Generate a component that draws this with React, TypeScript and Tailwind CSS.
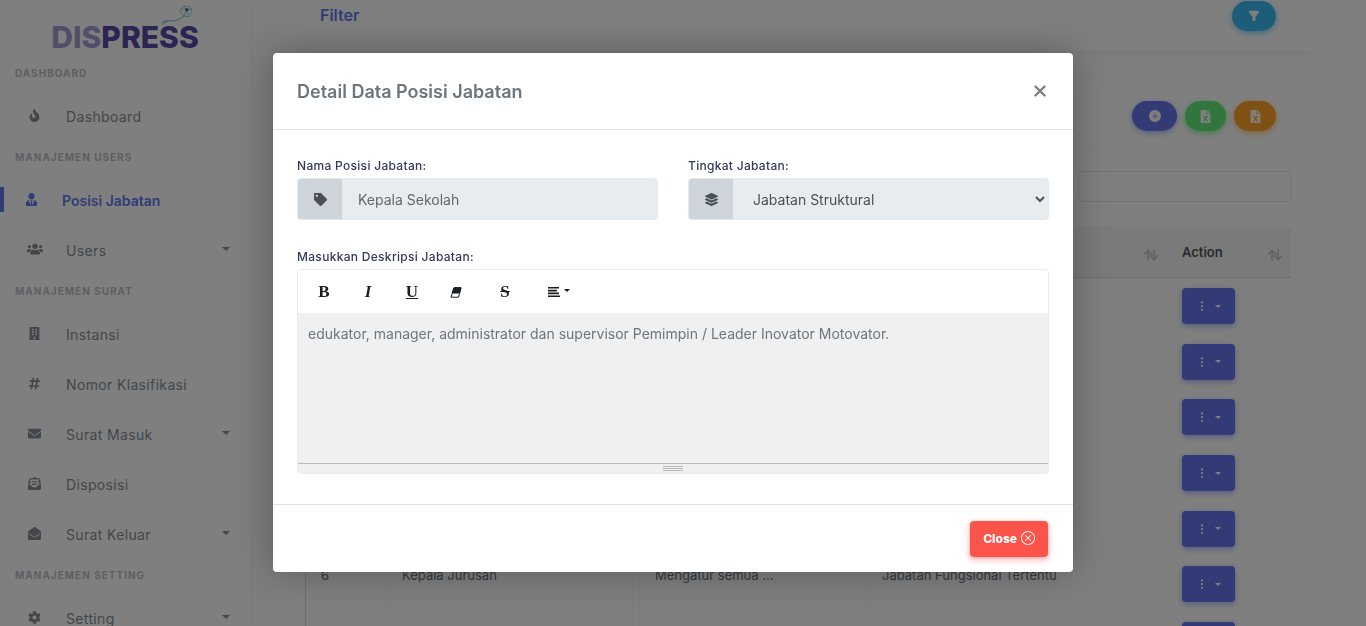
import type { ReactNode } from "react";
import {
  FaBuilding,
  FaCog,
  FaEnvelope,
  FaEnvelopeOpen,
  FaEnvelopeOpenText,
  FaFileExcel,
  FaFire,
  FaHashtag,
  FaLayerGroup,
  FaTag,
  FaUsers,
  FaUserTie,
} from "react-icons/fa";
import { BsFunnelFill, BsPlusCircleFill, BsThreeDotsVertical, BsXCircle } from "react-icons/bs";

function Caret({ className }: { className: string }) {
  return (
    <svg viewBox="0 0 8 4" className={className} fill="currentColor" aria-hidden="true">
      <path d="M0 0h8L4 4z" />
    </svg>
  );
}

function SortArrows() {
  return (
    <svg viewBox="0 0 16 12" className="h-3 w-4 text-[#c4c4c4]" fill="none" stroke="currentColor" strokeWidth="1.7" aria-hidden="true">
      <path d="M5 11.5V1.5M1 5.5l4-4 4.5 4.5M11 .5v10M6.500 6l4.500 4.500 4-4" />
    </svg>
  );
}

function Logo() {
  return (
    <a href="#" className="relative flex h-[58px] items-end justify-center pb-[3px]" aria-label="Dispress">
      <span className="text-[30px] leading-9 font-extrabold text-[#544aa6]">
        <span className="text-[#a49cd4]">DIS</span>PRESS
      </span>
      <svg viewBox="0 0 32 22" className="absolute top-[5px] left-[161px] h-[22px] w-8" fill="none" strokeWidth="0.7" aria-hidden="true">
        <path d="M2 20c-1-3 1-5 4-4-1 2-2 2-3 1M6 16c4-1 6 1 10-1 3-1 5-2 7-4" stroke="#3f9d99" />
        <path d="M20 4l3-3 6 1 2 5-3 5-5-1-4-4zM20 4l5 1 6-1M25 5l3 7M25 5l-2 6M23 1l2 4" stroke="#6fc3c4" />
        <path d="M24 3l4 1-2 3z" fill="#5248a8" />
      </svg>
    </a>
  );
}

function MenuHeading({ children }: { children: ReactNode }) {
  return (
    <h2 className="h-[34px] pt-[7px] pl-[15px] text-[10px] leading-4 font-bold tracking-widest text-[#bcbfc3] uppercase">{children}</h2>
  );
}

function MenuItem({ icon, label, active, dropdown }: { icon: ReactNode; label: string; active?: boolean; dropdown?: boolean }) {
  return (
    <a
      href="#"
      className={
        active
          ? "relative flex h-[50px] items-center pl-[18px] text-sm font-semibold text-[#6777ef]"
          : "relative flex h-[50px] items-center pl-[21px] text-sm tracking-wide text-[#868e96]"
      }
    >
      {active && <span className="absolute top-[11px] left-0 h-[25px] w-1 bg-[#6777ef]" />}
      <span className={active ? "flex w-[44px] pb-1 text-[13px]" : "flex w-[45px] pb-1 text-[13px]"}>
        <span className="flex w-[27px] justify-center">{icon}</span>
      </span>
      <span className="flex-1">{label}</span>
      {dropdown && <Caret className="mr-5 mb-1 h-1 w-2" />}
    </a>
  );
}

const rows = [
  ["1", "Kepala Sekolah", "edukator, manager ...", "Jabatan Struktural"],
  ["2", "Wakil Kepala", "Membantu kepala ...", "Jabatan Struktural"],
  ["3", "Kepala TU", "Mengatur tata ...", "Jabatan Struktural"],
  ["4", "Bendahara", "Mengatur keuangan ...", "Jabatan Struktural"],
  ["5", "Guru", "Mengajar siswa ...", "Jabatan Fungsional"],
  ["6", "Kepala Jurusan", "Mengatur semua ...", "Jabatan Fungsional Tertentu"],
  ["", "", "", ""],
];

function DataTable() {
  return (
    <table className="mt-[25px] ml-1 w-[calc(100%-4px)] table-fixed border-separate border-spacing-0 border-l border-[#dcdcdc] text-[13px] text-[#6c757d]">
      <colgroup>
        <col className="w-[81px]" />
        <col />
        <col className="w-[227px]" />
        <col className="w-[300px]" />
        <col className="w-[124px]" />
      </colgroup>
      <thead>
        <tr className="h-[51px] bg-[#f5f5f5] text-left text-[#555]">
          {["#", "Nama", "Deskripsi", "Tingkat Jabatan", "Action"].map((title) => (
            <th key={title} scope="col" className="border-b border-[#dcdcdc] pt-[2px] pr-2 pl-[15px] font-semibold">
              <div className="flex items-center justify-between">
                {title}
                <span className="pt-1">
                  <SortArrows />
                </span>
              </div>
            </th>
          ))}
        </tr>
      </thead>
      <tbody>
        {rows.map((row, n) => (
          <tr key={n} className="h-14 nth-[3n+2]:h-[55px]">
            {row.map((cell, i) => (
              <td key={i} className="border-r border-[#f6f6f6] pt-[9px] pl-[15px] align-top leading-5">
                {cell}
              </td>
            ))}
            <td className="pl-[15px]">
              <button
                type="button"
                aria-label="Menu"
                className="flex h-9 w-[53px] items-center justify-center gap-[7px] rounded bg-[#6777ef] text-white shadow-[0_2px_6px_#acb5f6]"
              >
                <BsThreeDotsVertical className="size-3" />
                <Caret className="h-[3px] w-[6px]" />
              </button>
            </td>
          </tr>
        ))}
      </tbody>
    </table>
  );
}

function Field({ id, label, icon, children }: { id: string; label: string; icon: ReactNode; children: ReactNode }) {
  return (
    <div className="min-w-0 flex-1">
      <label htmlFor={id} className="mb-1 block text-xs leading-4 font-medium tracking-wide text-[#34395e]">
        {label}
      </label>
      <div className="flex h-[42px] overflow-hidden rounded border border-[#e4e6fc] bg-[#e9ecef]">
        <span className="flex w-11 items-center justify-center bg-[#ced4da] text-[13px] text-[#495057]">{icon}</span>
        {children}
      </div>
    </div>
  );
}

function Tool({ label, children }: { label: string; children: ReactNode }) {
  return (
    <button
      type="button"
      aria-label={label}
      className="flex h-7 w-11 items-center justify-center font-['Liberation_Serif',serif] text-[17px] font-bold text-[#1b1e21]"
    >
      {children}
    </button>
  );
}

function DetailModal() {
  return (
    <div className="fixed inset-0 flex items-center justify-center bg-black/50 pr-5 pb-px">
      <section role="dialog" aria-labelledby="modal-title" className="w-full max-w-[800px] rounded bg-white shadow-[0_0_40px_rgba(0,0,0,0.3)]">
        <header className="flex h-[77px] items-center justify-between border-b border-[#dee2e6] pr-[27px] pl-6">
          <h1 id="modal-title" className="pt-px text-lg font-semibold text-[#6c757d]">
            Detail Data Posisi Jabatan
          </h1>
          <button type="button" aria-label="Tutup" className="text-[#7f7f7f]">
            <svg viewBox="0 0 12 12" className="size-3" fill="none" stroke="currentColor" strokeWidth="2.4" strokeLinecap="round" aria-hidden="true">
              <path d="M1.500 1.500l9 9M10.500 1.500l-9 9" />
            </svg>
          </button>
        </header>
        <div className="px-6 pt-7 pb-[30px]">
          <div className="flex gap-[30px]">
            <Field id="nama" label="Nama Posisi Jabatan:" icon={<FaTag />}>
              <input id="nama" readOnly defaultValue="Kepala Sekolah" className="min-w-0 flex-1 px-4 pt-[2px] text-sm text-[#60686f] outline-none" />
            </Field>
            <Field id="tingkat" label="Tingkat Jabatan:" icon={<FaLayerGroup />}>
              <select id="tingkat" className="min-w-0 flex-1 pt-px pl-4 text-sm text-[#495057] outline-none">
                <option>Jabatan Struktural</option>
              </select>
            </Field>
          </div>
          <label htmlFor="deskripsi" className="mt-[29px] mb-1 block text-xs leading-4 font-medium tracking-wide text-[#34395e]">
            Masukkan Deskripsi Jabatan:
          </label>
          <div className="overflow-hidden rounded border border-[#ebebeb]">
            <div className="flex h-[43px] items-center pt-px pl-1">
              <Tool label="Bold">B</Tool>
              <Tool label="Italic"><span className="italic">I</span></Tool>
              <Tool label="Underline"><span className="underline">U</span></Tool>
              <Tool label="Hapus format">
                <svg viewBox="0 0 12 11" className="h-[11px] w-3" aria-hidden="true">
                  <path d="M4 .8h7L8.500 10.200H1z" fill="#fff" stroke="#1b1e21" strokeLinejoin="round" />
                  <path d="M4 .8h7L9.500 6H2.200z" fill="#1b1e21" stroke="#1b1e21" strokeLinejoin="round" />
                </svg>
              </Tool>
              <span className="ml-[5px]">
                <Tool label="Strikethrough"><span className="px-[2px] line-through">S</span></Tool>
              </span>
              <span className="ml-[10px]">
                <Tool label="Paragraf">
                  <svg viewBox="0 0 12 10" className="mr-1 h-[10px] w-3" fill="currentColor" aria-hidden="true">
                    <path d="M0 0h11v1.600H0zM0 2.800h9v1.600H0zM0 5.600h11v1.600H0zM0 8.400h12v1.600H0z" />
                  </svg>
                  <Caret className="mb-1 h-[3px] w-[6px]" />
                </Tool>
              </span>
            </div>
            <textarea
              id="deskripsi"
              readOnly
              className="block h-[150px] w-full resize-none bg-[#f0f0f0] px-[10px] py-[9px] text-sm leading-6 text-[#6c757d] outline-none"
              defaultValue="edukator, manager, administrator dan supervisor Pemimpin / Leader Inovator Motovator."
            />
            <div className="flex h-[10px] flex-col items-center gap-px border-t border-[#bababa] bg-[#f0f0f0] pt-[2px]">
              <span className="h-px w-5 bg-[#bababa]" />
              <span className="h-px w-5 bg-[#bababa]" />
              <span className="h-px w-5 bg-[#bababa]" />
            </div>
          </div>
        </div>
        <footer className="flex justify-end border-t border-[#dee2e6] px-[25px] pt-4 pb-[15px]">
          <button
            type="button"
            className="flex h-9 items-center gap-1 rounded bg-[#fc544b] px-[13px] text-xs font-extrabold text-white shadow-[0_2px_6px_#fd9b96]"
          >
            Close <BsXCircle className="mb-[2px] size-[14px]" />
          </button>
        </footer>
      </section>
    </div>
  );
}

export default function App() {
  return (
    <div className="flex h-screen overflow-hidden bg-[#fdfdfd] font-['Inter',sans-serif]">
      <aside className="w-[250px] shrink-0 overflow-hidden bg-white shadow-[0_4px_8px_rgba(0,0,0,0.03)]">
        <Logo />
        <nav>
          <MenuHeading>Dashboard</MenuHeading>
          <MenuItem icon={<FaFire />} label="Dashboard" />
          <MenuHeading>Manajemen Users</MenuHeading>
          <MenuItem icon={<FaUserTie />} label="Posisi Jabatan" active />
          <MenuItem icon={<FaUsers className="size-4" />} label="Users" dropdown />
          <MenuHeading>Manajemen Surat</MenuHeading>
          <MenuItem icon={<FaBuilding />} label="Instansi" />
          <MenuItem icon={<FaHashtag />} label="Nomor Klasifikasi" />
          <MenuItem icon={<FaEnvelope />} label="Surat Masuk" dropdown />
          <MenuItem icon={<FaEnvelopeOpenText />} label="Disposisi" />
          <MenuItem icon={<FaEnvelopeOpen />} label="Surat Keluar" dropdown />
          <MenuHeading>Manajemen Setting</MenuHeading>
          <MenuItem icon={<FaCog />} label="Setting" dropdown />
        </nav>
      </aside>
      <main className="min-w-0 flex-1 pr-[50px] pl-[26px]">
        <section className="flex items-center justify-between rounded-b bg-white pt-px pr-10 pb-5 pl-11 shadow-[0_4px_8px_rgba(0,0,0,0.03)]">
          <h2 className="pb-[2px] text-base leading-7 font-semibold text-[#6777ef]">Filter</h2>
          <button type="button" aria-label="Filter" className="flex h-[30px] w-11 items-center justify-center rounded-full bg-[#3abaf4] text-white shadow-[0_2px_6px_#82d3f8]">
            <BsFunnelFill className="size-3" />
          </button>
        </section>
        <section className="mt-[29px] rounded bg-white shadow-[0_4px_8px_rgba(0,0,0,0.03)]">
          <div className="flex h-[71px] items-center justify-end gap-2 border-b border-[#f6f6f6] pt-[2px] pr-10">
            <button type="button" aria-label="Tambah" className="flex h-[30px] w-[45px] items-center justify-center rounded-full bg-[#6777ef] text-white shadow-[0_2px_6px_#acb5f6]">
              <BsPlusCircleFill className="size-3" />
            </button>
            <button type="button" aria-label="Ekspor" className="flex h-[30px] w-[41px] items-center justify-center rounded-full bg-[#63ed7a] text-white shadow-[0_2px_6px_#81f194]">
              <FaFileExcel className="size-[13px]" />
            </button>
            <button type="button" aria-label="Impor" className="flex h-[30px] w-[42px] items-center justify-center rounded-full bg-[#ffa426] text-white shadow-[0_2px_6px_#ffc473]">
              <FaFileExcel className="size-[13px]" />
            </button>
          </div>
          <div className="px-[25px] pt-5 pb-6">
            <div className="flex justify-end">
              <input type="search" aria-label="Cari" className="h-[31px] w-[213px] rounded border border-[#e4e6fc] px-2 text-sm" />
            </div>
            <DataTable />
          </div>
        </section>
      </main>
      <DetailModal />
    </div>
  );
}
